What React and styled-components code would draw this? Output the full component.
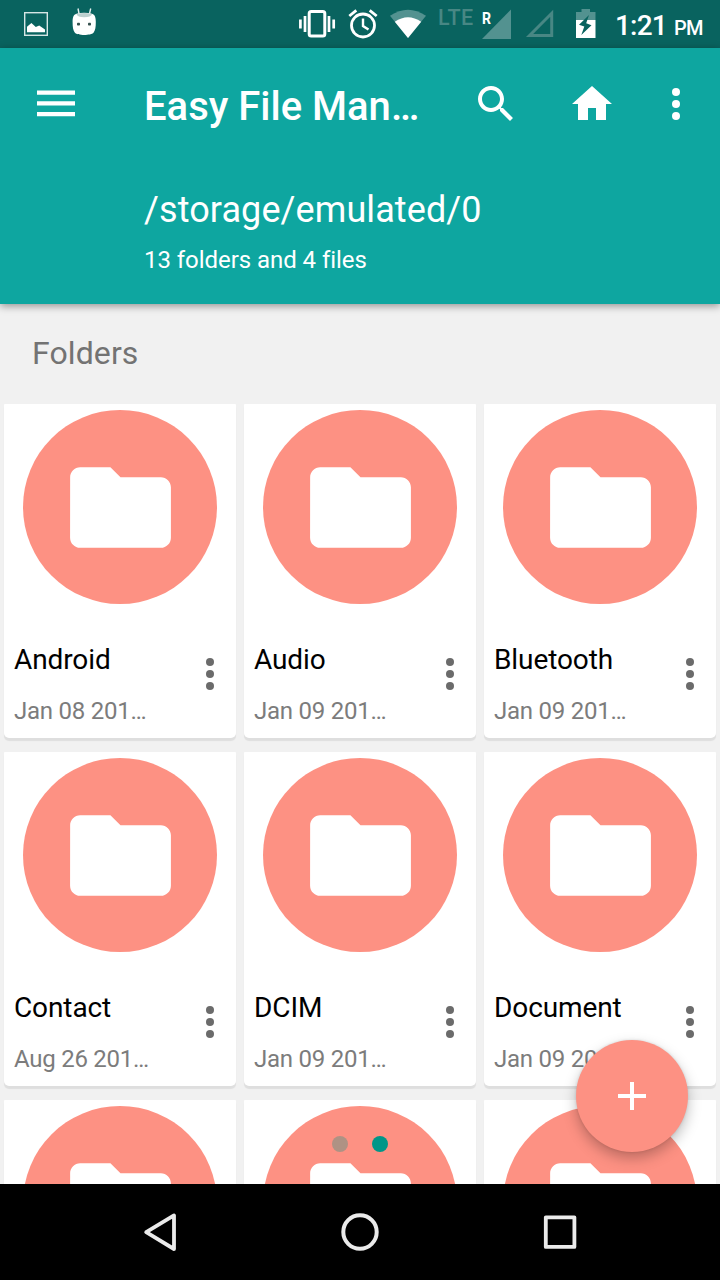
import React from "react";
import styled, { createGlobalStyle } from 'styled-components';

const GlobalStyle = createGlobalStyle`
  body {
    margin: 0;
    font-family: Roboto, "Liberation Sans", sans-serif;
  }
`

const Screen = styled.div`
  position: relative;
  display: flex;
  flex-direction: column;
  width: 720px;
  height: 1280px;
  overflow: hidden;
  background-color: #f1f1f1;
  svg {
    display: block;
    flex-shrink: 0;
  }
`

const StatusBlock = styled.div`
  display: flex;
  height: 48px;
  background-color: #09635f;
  .notifications {
    display: flex;
    gap: 24px;
    padding-left: 24px;
  }
  .system {
    display: flex;
    margin-left: auto;
    padding-right: 15px;
  }
`

const NetworkLabel = styled.span`
  width: 44px;
  font-size: 21.5px;
  line-height: 36px;
  font-weight: 500;
  color: #488784;
  letter-spacing: 0.4px;
`

const Roaming = styled.span`
  position: absolute;
  left: 0;
  top: 10px;
  font-size: 16px;
  line-height: 17px;
  font-weight: 700;
  color: #fff;
  transform: scaleX(0.88);
  transform-origin: left;
`

const Signal = styled.div`
  position: relative;
  width: 43px;
`

const Clock = styled.div`
  width: 90px;
  margin-left: 18px;
  line-height: 51px;
  font-size: 28px;
  font-weight: 500;
  letter-spacing: -0.8px;
  color: #fff;
  white-space: nowrap;
  small {
    font-size: 20px;
    margin-left: 1px;
  }
`

const HeaderBlock = styled.header`
  height: 256px;
  box-sizing: border-box;
  background-color: #0ea6a0;
  box-shadow: 0 2px 8px rgba(0, 0, 0, 0.4);
  z-index: 1;
  color: #fff;
`

const Toolbar = styled.div`
  display: flex;
  align-items: center;
  height: 112px;
  padding: 0 20px 0 32px;
  h1 {
    width: 328px;
    margin: 5px 0 0 64px;
    font-size: 40px;
    line-height: 48px;
    font-weight: 500;
    white-space: nowrap;
  }
`

const IconButton = styled.button`
  display: block;
  padding: 0;
  border: none;
  background: none;
  color: ${({ $color }) => $color || '#fff'};
  margin-left: ${({ $gap }) => $gap || 0}px;
  cursor: pointer;
`

const PathInfo = styled.div`
  padding: 28px 0 0 144px;
  .path {
    font-size: 36px;
    line-height: 44px;
    letter-spacing: 0.1px;
  }
  .count {
    margin-top: 14px;
    font-size: 24px;
    line-height: 28px;
    letter-spacing: -0.05px;
  }
`

const Content = styled.main`
  flex: 1;
  min-height: 0;
  overflow: hidden;
  h2 {
    height: 100px;
    margin: 0;
    padding-left: 32px;
    font-size: 32px;
    line-height: 98px;
    font-weight: 400;
    letter-spacing: 0.1px;
    color: #737373;
  }
`

const Grid = styled.div`
  display: grid;
  grid-template-columns: repeat(3, 232px);
  gap: 14px 8px;
  padding: 0 4px;
`

const Card = styled.div`
  height: 334px;
  box-sizing: border-box;
  padding-top: 6px;
  background-color: #fff;
  border-radius: 1px 1px 5px 5px;
  box-shadow: 0 3px 1px rgba(0, 0, 0, 0.08);
`

const FolderCircle = styled.div`
  display: flex;
  align-items: center;
  justify-content: center;
  width: 194px;
  height: 194px;
  margin: 0 auto;
  border-radius: 50%;
  background-color: #fd9183;
  svg {
    margin: 1px 0 0 1px;
  }
`

const CardInfo = styled.div`
  display: flex;
  justify-content: space-between;
  padding: 39px 2px 0 10px;
  .name {
    font-size: 28px;
    line-height: 34px;
    letter-spacing: -0.1px;
    color: #000;
    white-space: nowrap;
  }
  .date {
    margin-top: 20px;
    font-size: 24px;
    line-height: 28px;
    letter-spacing: -0.25px;
    color: #7c7c7c;
    white-space: nowrap;
  }
`

const CardMenu = styled(IconButton)`
  height: 48px;
  margin-top: 7px;
`

const Pager = styled.div`
  position: absolute;
  left: 332px;
  top: 1136px;
  display: flex;
  gap: 24px;
`

const Dot = styled.span`
  width: 16px;
  height: 16px;
  border-radius: 50%;
  background-color: ${({ $active }) => $active ? '#009688' : '#ae9284'};
`

const AddButton = styled.button`
  position: absolute;
  left: 576px;
  top: 1040px;
  display: flex;
  align-items: center;
  justify-content: center;
  width: 112px;
  height: 112px;
  padding: 0;
  border: none;
  border-radius: 50%;
  background-color: #fd9183;
  box-shadow: 0 6px 14px rgba(0, 0, 0, 0.26), 0 0 3px rgba(0, 0, 0, 0.12);
  cursor: pointer;
`

const NavBlock = styled.nav`
  display: flex;
  align-items: center;
  justify-content: center;
  gap: 152px;
  height: 96px;
  background-color: #000;
  z-index: 1;
`

const MoreIcon = () => (
    <svg width="48" height="48" viewBox="0 0 24 24" fill="currentColor">
        <circle cx="12" cy="6" r="2" />
        <circle cx="12" cy="12" r="2" />
        <circle cx="12" cy="18" r="2" />
    </svg>
)

const StatusBar = () => (
    <StatusBlock>
        <div className="notifications">
            <svg width="24" height="48" viewBox="24 0 24 48">
                <rect x="24.7" y="12.7" width="22.6" height="22.6" fill="none" stroke="#d5e6e5" strokeWidth="1.4" />
                <path d="M27 32.3v-5.6l4.4-3.7 4.4 4 3.4-1.6 5.8 4v2.9z" fill="#fff" />
            </svg>
            <svg width="24" height="48" viewBox="72 0 24 48">
                <path d="M78 8.5l1.2 6M90.7 8.5l-1.4 6" stroke="#e5efee" strokeWidth="1.4" />
                <path d="M76.5 13.8Q84 11.8 92 13.8c3 .8 3.8 4 3.8 8.2c0 5-.5 8.5-2.3 10.8c-2.4 2.9-16.2 2.9-18.6 0c-1.8-2.3-2.3-5.8-2.3-10.8c0-4.2.8-7.4 3.9-8.2z" fill="#fff" />
                <path d="M76.5 14Q84 11.8 92 14Q91 17.3 84.2 17.3Q77.5 17.3 76.5 14z" fill="#bdd0cf" />
                <rect x="77" y="22.7" width="3" height="2.8" rx=".8" fill="#36514f" />
                <rect x="88" y="22.7" width="3" height="2.8" rx=".8" fill="#36514f" />
            </svg>
        </div>
        <div className="system">
            <svg width="139" height="48" viewBox="299 0 139 48">
                <rect x="309.2" y="11.5" width="15.6" height="24.6" rx="2" fill="none" stroke="#fff" strokeWidth="3" />
                <path d="M305 16v16M329 16v16" stroke="#fff" strokeWidth="2.7" />
                <path d="M300.4 19.5v9M333.7 19.5v9" stroke="#fff" strokeWidth="2.7" />
                <circle cx="363" cy="25.5" r="11.5" fill="none" stroke="#fff" strokeWidth="2.8" />
                <path d="M363 18.5v7.5l5.5 3.6" fill="none" stroke="#fff" strokeWidth="2.4" />
                <path d="M349.3 16l7-5.7M376.7 16l-7-5.7" stroke="#fff" strokeWidth="2.8" />
                <path d="M390 15.8Q408 3.8 426 15.8L408 38z" fill="#539290" />
                <path d="M394.8 21.8Q408 12.8 421.2 21.8L408 38z" fill="#fff" />
            </svg>
            <NetworkLabel>LTE</NetworkLabel>
            <Signal>
                <svg width="43" height="48" viewBox="482 0 43 48">
                    <path d="M511 9.5V39h-29z" fill="#539290" />
                </svg>
                <Roaming>R</Roaming>
            </Signal>
            <svg width="72" height="48" viewBox="525 0 72 48">
                <path d="M551.7 13.3V35.4H529.6z" fill="none" stroke="#488784" strokeWidth="3" />
                <path d="M576 20v-8h5.5V9h8.5v3h5.5v8z" fill="#539290" />
                <path d="M576 20h19.5v18H576z" fill="#fff" />
                <path d="M589 15l-10 9.8 5.3 1.7-3 8.5 10.2-9.8-5.3-2z" fill="#09635f" />
            </svg>
            <Clock>1:21 <small>PM</small></Clock>
        </div>
    </StatusBlock>
)

const Header = () => (
    <HeaderBlock>
        <Toolbar>
            <IconButton aria-label="Menu">
                <svg width="48" height="48" viewBox="0 0 48 48" fill="currentColor">
                    <path d="M5 10.5h38v4.2H5zM5 21.3h38v4.2H5zM5 32h38v4.2H5z" />
                </svg>
            </IconButton>
            <h1>Easy File Man…</h1>
            <IconButton aria-label="Search">
                <svg width="48" height="48" viewBox="0 0 24 24" fill="currentColor">
                    <path d="M15.5 14h-.79l-.28-.27C15.41 12.59 16 11.11 16 9.5 16 5.91 13.09 3 9.5 3S3 5.91 3 9.5 5.91 16 9.5 16c1.61 0 3.09-.59 4.23-1.57l.27.28v.79l5 4.99L20.49 19l-4.99-5zm-6 0C7.01 14 5 11.99 5 9.5S7.01 5 9.5 5 14 7.01 14 9.5 11.99 14 9.5 14z" />
                </svg>
            </IconButton>
            <IconButton aria-label="Home" $gap={48}>
                <svg width="48" height="48" viewBox="0 0 24 24" fill="currentColor">
                    <path d="M10 20v-6h4v6h5v-8h3L12 3 2 12h3v8z" />
                </svg>
            </IconButton>
            <IconButton aria-label="More" $gap={36}><MoreIcon /></IconButton>
        </Toolbar>
        <PathInfo>
            <div className="path">/storage/emulated/0</div>
            <div className="count">13 folders and 4 files</div>
        </PathInfo>
    </HeaderBlock>
)

const FolderCard = ({ name, date }) => (
    <Card>
        <FolderCircle>
            <svg width="121" height="121" viewBox="0 0 24 24" fill="#fff">
                <path d="M10 4H4c-1.1 0-1.99.9-1.99 2L2 18c0 1.1.9 2 2 2h16c1.1 0 2-.9 2-2V8c0-1.1-.9-2-2-2h-8l-2-2z" />
            </svg>
        </FolderCircle>
        {name &&
            <CardInfo>
                <div>
                    <div className="name">{name}</div>
                    <div className="date">{date}</div>
                </div>
                <CardMenu aria-label="Folder menu" $color="#6b6b6b"><MoreIcon /></CardMenu>
            </CardInfo>
        }
    </Card>
)

const folders = [
    { name: 'Android', date: 'Jan 08 201…' },
    { name: 'Audio', date: 'Jan 09 201…' },
    { name: 'Bluetooth', date: 'Jan 09 201…' },
    { name: 'Contact', date: 'Aug 26 201…' },
    { name: 'DCIM', date: 'Jan 09 201…' },
    { name: 'Document', date: 'Jan 09 201…' },
    // the last row is only half on screen
    {}, {}, {},
]

const App = () => (
    <>
        <GlobalStyle />
        <Screen>
            <StatusBar />
            <Header />
            <Content>
                <h2>Folders</h2>
                <Grid>
                    {folders.map((folder, i) => <FolderCard key={i} {...folder} />)}
                </Grid>
            </Content>
            <Pager>
                <Dot />
                <Dot $active />
            </Pager>
            <AddButton aria-label="Add">
                <svg width="28" height="28" viewBox="0 0 28 28">
                    <path d="M12 0h4v12h12v4H16v12h-4V16H0v-4h12z" fill="#fff" />
                </svg>
            </AddButton>
            <NavBlock>
                <svg width="48" height="48" viewBox="0 0 48 48" fill="none" stroke="#ebebeb" strokeWidth="3.8" strokeLinejoin="round">
                    <path d="M38 7.4v33.6L10.2 24.2z" />
                </svg>
                <svg width="48" height="48" viewBox="0 0 48 48" fill="none" stroke="#ebebeb" strokeWidth="4">
                    <circle cx="24" cy="24" r="16.7" />
                </svg>
                <svg width="48" height="48" viewBox="0 0 48 48" fill="none" stroke="#ebebeb" strokeWidth="3.8" strokeLinejoin="round">
                    <rect x="9.8" y="9.3" width="28.6" height="29.6" />
                </svg>
            </NavBlock>
        </Screen>
    </>
)
export default App;
